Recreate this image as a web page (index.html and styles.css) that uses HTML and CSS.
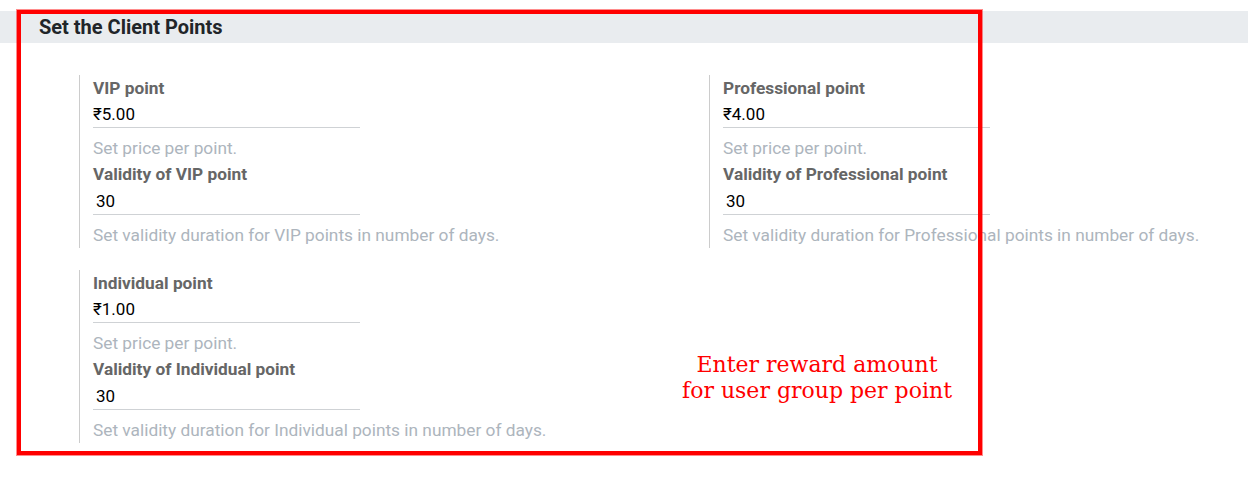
FILE: index.html
```html
<!DOCTYPE html>
<html lang="en">
<head>
<meta charset="utf-8">
<title>Set the Client Points</title>
<link rel="stylesheet" href="styles.css">
</head>
<body>
<div class="page">
  <h2 class="section-title">Set the Client Points</h2>
  <div class="settings">
    <div class="setting">
      <div class="label">VIP point</div>
      <div class="value">₹5.00</div>
      <div class="help">Set price per point.</div>
      <div class="label label-second">Validity of VIP point</div>
      <div class="value value-int">30</div>
      <div class="help">Set validity duration for VIP points in number of days.</div>
    </div>
    <div class="setting">
      <div class="label">Professional point</div>
      <div class="value">₹4.00</div>
      <div class="help">Set price per point.</div>
      <div class="label label-second">Validity of Professional point</div>
      <div class="value value-int">30</div>
      <div class="help">Set validity duration for Professional points in number of days.</div>
    </div>
    <div class="setting">
      <div class="label">Individual point</div>
      <div class="value">₹1.00</div>
      <div class="help">Set price per point.</div>
      <div class="label label-second">Validity of Individual point</div>
      <div class="value value-int">30</div>
      <div class="help">Set validity duration for Individual points in number of days.</div>
    </div>
  </div>
  <div class="annotation-box"></div>
  <div class="annotation-text">Enter reward amount<br>for user group per point</div>
</div>
</body>
</html>
```
FILE: styles.css
```css
html, body {
  margin: 0;
  padding: 0;
  background: #ffffff;
}

body {
  font-family: Roboto, "Liberation Sans", Arial, sans-serif;
  color: #212529;
}

.page {
  position: relative;
  width: 1248px;
  height: 492px;
  padding-top: 11px;
  box-sizing: border-box;
  overflow: hidden;
}

.section-title {
  margin: 0;
  height: 32px;
  line-height: 32px;
  padding-left: 39px;
  background: #e9ecef;
  font-size: 20px;
  font-weight: 700;
  color: #212529;
}

.settings {
  display: grid;
  grid-template-columns: 630px 1fr;
  row-gap: 22px;
  padding: 32px 0 0 79px;
}

.setting {
  border-left: 1px solid #cccccc;
  padding: 3px 0 2px 13px;
}

.label {
  font-size: 17.3px;
  line-height: 21px;
  font-weight: 700;
  color: #666666;
}

.label-second {
  margin-top: 5px;
}

.value {
  width: 267px;
  height: 26px;
  line-height: 26px;
  margin-top: 2px;
  border-bottom: 1px solid #cfd2d5;
  font-size: 17px;
  color: #000000;
}

.label-second + .value {
  margin-top: 3px;
}

.value-int {
  padding-left: 3px;
  width: 264px;
}

.help {
  margin-top: 10px;
  font-size: 17.3px;
  line-height: 21px;
  color: #adb5bd;
  white-space: nowrap;
}

.annotation-box {
  position: absolute;
  left: 17px;
  top: 10px;
  width: 965px;
  height: 445px;
  box-sizing: border-box;
  border: 4px solid #ff0000;
  box-shadow: 0 0 0 1px rgba(255, 0, 0, 0.45);
}

.annotation-text {
  position: absolute;
  left: 667px;
  top: 352px;
  width: 300px;
  text-align: center;
  font-family: "DejaVu Serif", serif;
  font-size: 22px;
  line-height: 26px;
  color: #ff0000;
}
```
